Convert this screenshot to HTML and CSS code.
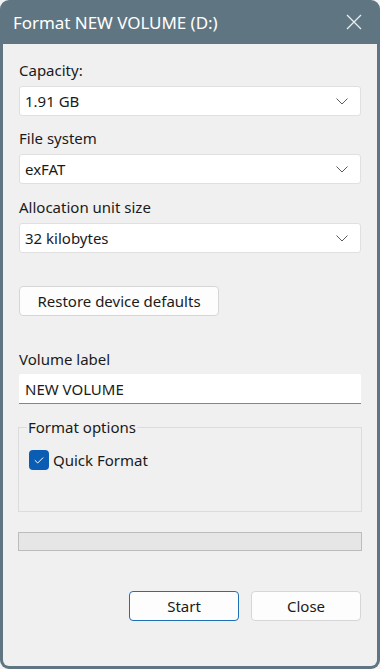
FILE: index.html
```html
<!DOCTYPE html>
<html>
<head>
<meta charset="utf-8">
<link rel="stylesheet" href="styles.css">
</head>
<body>
<div class="window">
  <div class="titlebar">
    <span class="title">Format NEW VOLUME (D:)</span>
    <svg class="close-x" width="16" height="16" viewBox="0 0 16 16"><path d="M1 1 L15 15 M15 1 L1 15" stroke="#e9eef0" stroke-width="1.3" fill="none"/></svg>
  </div>
  <div class="content">
    <div class="label first">Capacity:</div>
    <div class="select"><span>1.91 GB</span><svg class="chev" width="12" height="7" viewBox="0 0 12 7"><path d="M0.5 0.5 L6 6 L11.5 0.5" stroke="#5c5c5c" stroke-width="1" fill="none"/></svg></div>
    <div class="label">File system</div>
    <div class="select"><span>exFAT</span><svg class="chev" width="12" height="7" viewBox="0 0 12 7"><path d="M0.5 0.5 L6 6 L11.5 0.5" stroke="#5c5c5c" stroke-width="1" fill="none"/></svg></div>
    <div class="label alloc">Allocation unit size</div>
    <div class="select"><span>32 kilobytes</span><svg class="chev" width="12" height="7" viewBox="0 0 12 7"><path d="M0.5 0.5 L6 6 L11.5 0.5" stroke="#5c5c5c" stroke-width="1" fill="none"/></svg></div>
    <button class="btn restore">Restore device defaults</button>
    <div class="label vol">Volume label</div>
    <div class="textinput">NEW VOLUME</div>
    <fieldset class="options">
      <legend>Format options</legend>
      <div class="check-row">
        <span class="checkbox"><svg width="20" height="20" viewBox="0 0 20 20"><path d="M5.8 10.2 L8.7 13 L14.2 7.5" stroke="#ffffff" stroke-width="1" fill="none"/></svg></span>
        <span class="check-label">Quick Format</span>
      </div>
    </fieldset>
    <div class="progress"></div>
    <div class="actions">
      <button class="btn primary">Start</button>
      <button class="btn">Close</button>
    </div>
  </div>
</div>
</body>
</html>
```
FILE: styles.css
```css
html, body {
  margin: 0;
  padding: 0;
}
body {
  background: #f3f3f3;
  font-family: "Noto Sans", "Open Sans", sans-serif;
  color: #1a1a1a;
}
.window {
  width: 380px;
  height: 669px;
  box-sizing: border-box;
  background: #5f7682;
  border-radius: 9px;
  padding: 0 3px 3px 3px;
  display: flex;
  flex-direction: column;
}
.titlebar {
  height: 44px;
  flex: none;
  display: flex;
  align-items: center;
  justify-content: space-between;
  padding: 0 15px 0 10px;
}
.title {
  color: #ffffff;
  font-size: 17px;
  letter-spacing: -0.05px;
}
.close-x {
  display: block;
}
.content {
  flex: 1;
  background: #f0f0f0;
  border-radius: 0 0 6px 6px;
  padding: 0 16px;
  display: flex;
  flex-direction: column;
}
.label {
  font-size: 15px;
  line-height: 20px;
  margin-top: 12px;
  margin-bottom: 6px;
}
.label.first {
  margin-top: 16px;
}
.label.alloc {
  margin-top: 13px;
}
.select {
  height: 30px;
  box-sizing: border-box;
  background: #ffffff;
  border: 1px solid #e0e0e0;
  border-radius: 3px;
  display: flex;
  align-items: center;
  justify-content: space-between;
  padding: 0 12px 0 5px;
  font-size: 15px;
}
.chev {
  display: block;
}
.btn {
  font-family: "Noto Sans", "Open Sans", sans-serif;
  font-size: 15px;
  color: #1a1a1a;
  background: #fdfdfd;
  border: 1px solid #d6d6d6;
  border-radius: 4px;
  height: 30px;
  padding: 0;
  width: 110px;
}
.btn.restore {
  width: 200px;
  margin-top: 33px;
}
.btn.primary {
  border-color: #1f6fb5;
}
.label.vol {
  margin-top: 33px;
  margin-bottom: 5px;
}
.textinput {
  height: 30px;
  box-sizing: border-box;
  background: #ffffff;
  border-bottom: 1px solid #868686;
  border-radius: 2px 2px 0 0;
  display: flex;
  align-items: center;
  padding: 0 6px;
  font-size: 15px;
}
.options {
  margin: 13px -1px 0 -1px;
  border: 1px solid #dcdcdc;
  padding: 0 9px 41px 10px;
}
.options legend {
  font-size: 15px;
  line-height: 20px;
  padding: 0 1px;
  margin-left: -2px;
}
.check-row {
  display: flex;
  align-items: center;
  margin-top: 13px;
  gap: 4px;
}
.checkbox {
  width: 20px;
  height: 20px;
  background: #0a5db3;
  border-radius: 4px;
  display: block;
}
.checkbox svg {
  display: block;
}
.check-label {
  font-size: 15px;
  line-height: 20px;
}
.progress {
  margin: 20px -1px 0 -1px;
  height: 19px;
  box-sizing: border-box;
  background: #e6e6e6;
  border: 1px solid #bcbcbc;
}
.actions {
  margin-top: 40px;
  display: flex;
  justify-content: flex-end;
  gap: 12px;
}
```
